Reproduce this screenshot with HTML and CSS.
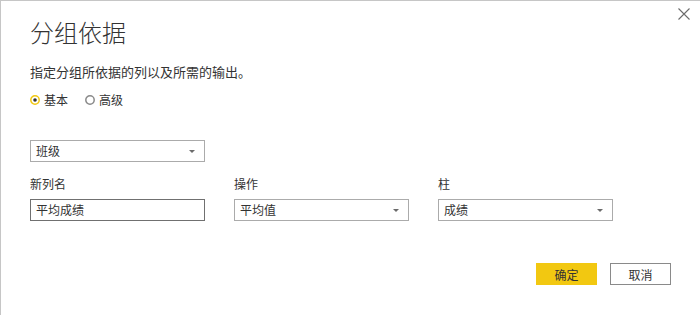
FILE: index.html
```html
<!DOCTYPE html>
<html lang="zh-CN">
<head>
  <meta charset="UTF-8">
  <title>分组依据</title>
  <link rel="stylesheet" href="styles.css">
</head>
<body>

  <div class="dialog">
    <button class="close" type="button" aria-label="关闭">
      <svg width="12" height="12" viewBox="0 0 12 12">
        <path d="M0.5 0.5 L11.5 11.5 M11.5 0.5 L0.5 11.5" stroke="#6b6b6b" stroke-width="1.1" fill="none"/>
      </svg>
    </button>

    <h1 class="title">分组依据</h1>
    <p class="subtitle">指定分组所依据的列以及所需的输出。</p>

    <div class="radios">
      <label class="radio">
        <svg width="10" height="10" viewBox="0 0 10 10">
          <circle cx="5" cy="5" r="4.2" fill="#fff" stroke="#f2c811" stroke-width="1.5"/>
          <circle cx="5" cy="5" r="1.8" fill="#333"/>
        </svg>
        基本
      </label>
      <label class="radio">
        <svg width="10" height="10" viewBox="0 0 10 10">
          <circle cx="5" cy="5" r="4.2" fill="#fff" stroke="#8a8a8a" stroke-width="1.5"/>
        </svg>
        高级
      </label>
    </div>

    <div class="select group-by">
      <span>班级</span>
      <i class="caret"></i>
    </div>

    <div class="fields">
      <div class="field">
        <div class="label">新列名</div>
        <div class="input">平均成绩</div>
      </div>
      <div class="field">
        <div class="label">操作</div>
        <div class="select">
          <span>平均值</span>
          <i class="caret"></i>
        </div>
      </div>
      <div class="field">
        <div class="label">柱</div>
        <div class="select">
          <span>成绩</span>
          <i class="caret"></i>
        </div>
      </div>
    </div>

    <div class="buttons">
      <button class="btn primary" type="button">确定</button>
      <button class="btn" type="button">取消</button>
    </div>
  </div>

</body>
</html>
```

FILE: styles.css
```css
body {
  margin: 0;
  font-family: "Noto Sans CJK SC", "Noto Sans", sans-serif;
  color: #333;
  background: #fff;
}

.dialog {
  position: relative;
  height: 314px;
  border-top: 1px solid #c6c6c6;
  border-left: 1px solid #c6c6c6;
  padding: 15px 29px 0 29px;
}

.close {
  position: absolute;
  top: 7px;
  right: 10px;
  padding: 0;
  border: none;
  background: none;
  line-height: 0;
}

.title {
  margin: 0;
  font-size: 24px;
  font-weight: 300;
  line-height: 32px;
  color: #333;
}

.subtitle {
  margin: 15px 0 0 0;
  font-size: 13px;
  line-height: 18px;
}

.radios {
  display: flex;
  gap: 17px;
  margin-top: 11px;
}

.radio {
  display: flex;
  align-items: center;
  gap: 4px;
  font-size: 12px;
  line-height: 16px;
}

.select,
.input {
  box-sizing: border-box;
  width: 175px;
  height: 22px;
  padding: 0 9px 0 5px;
  font-size: 12px;
  line-height: 20px;
  display: flex;
  align-items: center;
  justify-content: space-between;
}

.select {
  border: 1px solid #ababab;
}

.input {
  border: 1px solid #707070;
}

.group-by {
  margin-top: 32px;
}

.caret {
  width: 0;
  height: 0;
  border-top: 3px solid #6b6b6b;
  border-left: 3px solid transparent;
  border-right: 3px solid transparent;
}

.fields {
  display: flex;
  gap: 29px;
  margin-top: 14px;
}

.label {
  font-size: 12px;
  line-height: 16px;
  margin-bottom: 7px;
}

.buttons {
  display: flex;
  justify-content: flex-end;
  gap: 13px;
  margin-top: 42px;
}

.btn {
  box-sizing: border-box;
  width: 61px;
  height: 22px;
  padding: 0;
  font-family: inherit;
  font-size: 12px;
  color: #333;
  background: #fff;
  border: 1px solid #8a8a8a;
}

.btn.primary {
  background: #f2c811;
  border-color: #f2c811;
}
```
